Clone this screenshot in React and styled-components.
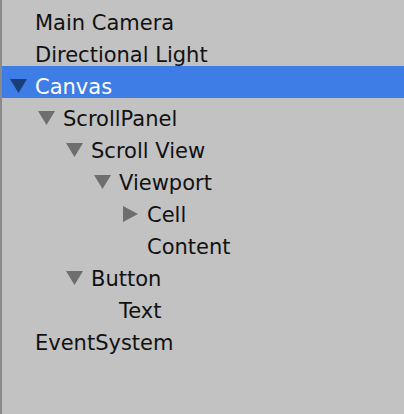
import React from 'react';
import styled, { createGlobalStyle } from 'styled-components';

const GlobalStyle = createGlobalStyle`
  html, body {
    margin: 0;
    padding: 0;
    background: #c2c2c2;
  }
`;

const Panel = styled.div`
  width: 404px;
  height: 414px;
  box-sizing: border-box;
  background: #c2c2c2;
  border-left: 2px solid #8a8a8a;
  padding-top: 2px;
  display: flex;
  flex-direction: column;
  overflow: hidden;
  font-family: "DejaVu Sans", "Liberation Sans", sans-serif;
`;

const Row = styled.div`
  height: 32px;
  box-sizing: border-box;
  display: flex;
  align-items: center;
  padding-top: 10px;
  padding-left: ${(p) => 8 + p.$depth * 28}px;
  background: ${(p) => (p.$selected ? '#3e7de6' : 'transparent')};
  color: ${(p) => (p.$selected ? '#ffffff' : '#111111')};
`;

const Toggle = styled.span`
  width: 25px;
  height: 16px;
  flex: none;
  display: flex;
  align-items: center;
  margin-top: -2px;
  color: ${(p) => (p.$selected ? '#1b3e78' : '#6e6e6e')};
`;

const Label = styled.span`
  font-size: 21px;
  line-height: 22px;
  white-space: nowrap;
`;

const Arrow = ({ open }) =>
  open ? (
    <svg width="17" height="14" viewBox="0 0 17 14">
      <polygon points="0,0 17,0 8.5,14" fill="currentColor" />
    </svg>
  ) : (
    <svg width="17" height="16" viewBox="0 0 17 16" style={{ marginLeft: 1 }}>
      <polygon points="0,0 15,8 0,16" fill="currentColor" />
    </svg>
  );

const items = [
  { name: 'Main Camera', depth: 0 },
  { name: 'Directional Light', depth: 0 },
  { name: 'Canvas', depth: 0, arrow: 'open', selected: true },
  { name: 'ScrollPanel', depth: 1, arrow: 'open' },
  { name: 'Scroll View', depth: 2, arrow: 'open' },
  { name: 'Viewport', depth: 3, arrow: 'open' },
  { name: 'Cell', depth: 4, arrow: 'closed' },
  { name: 'Content', depth: 4 },
  { name: 'Button', depth: 2, arrow: 'open' },
  { name: 'Text', depth: 3 },
  { name: 'EventSystem', depth: 0 },
];

export default function App() {
  return (
    <>
      <GlobalStyle />
      <Panel>
        {items.map((it) => (
          <Row key={it.name} $depth={it.depth} $selected={it.selected}>
            <Toggle $selected={it.selected}>
              {it.arrow && <Arrow open={it.arrow === 'open'} />}
            </Toggle>
            <Label>{it.name}</Label>
          </Row>
        ))}
      </Panel>
    </>
  );
}
